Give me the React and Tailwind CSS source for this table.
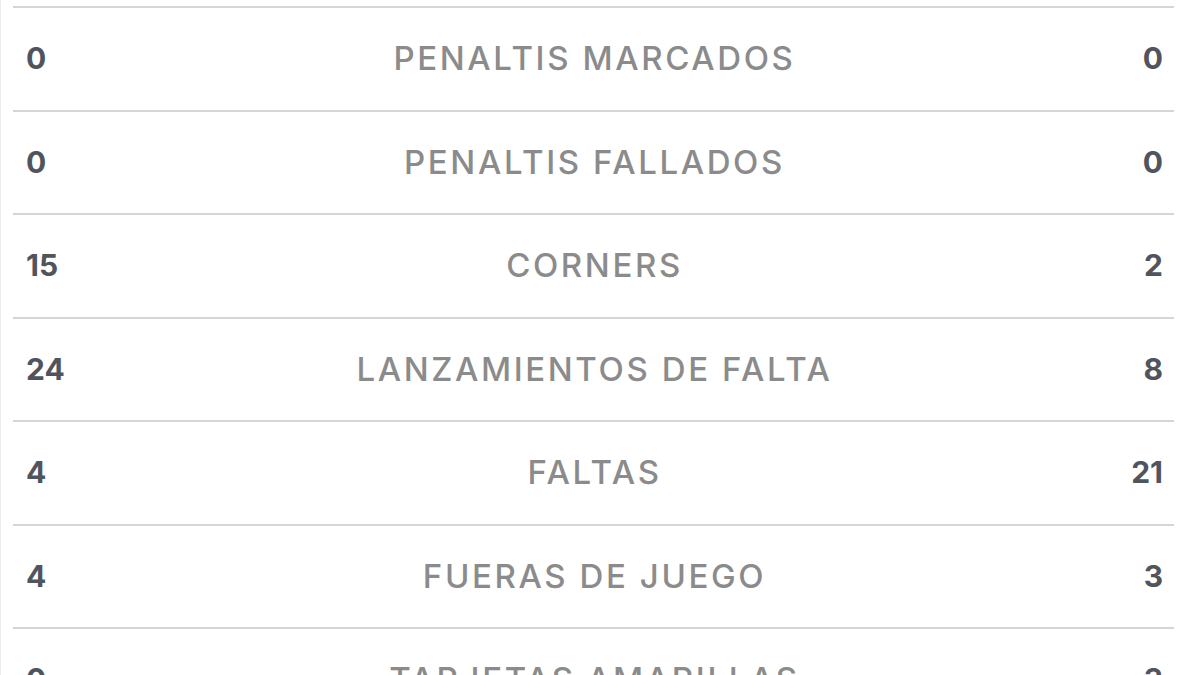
import React from "react";

const stats = [
  { home: "0", label: "PENALTIS MARCADOS", away: "0" },
  { home: "0", label: "PENALTIS FALLADOS", away: "0" },
  { home: "15", label: "CORNERS", away: "2" },
  { home: "24", label: "LANZAMIENTOS DE FALTA", away: "8" },
  { home: "4", label: "FALTAS", away: "21" },
  { home: "4", label: "FUERAS DE JUEGO", away: "3" },
  { home: "0", label: "TARJETAS AMARILLAS", away: "3" },
];

const App = () => {
  return (
    <div className="h-[675px] w-[1200px] overflow-hidden bg-white font-['Inter',sans-serif]">
      <div className="h-full border-l border-[#ececec] pl-[12px] pt-[6px]">
        <div className="w-[1161px]">
          {stats.map((row, i) => (
            <div
              key={i}
              className="flex h-[103.5px] items-center border-t-2 border-[#d5d5d5] pl-[13px] pr-[11px]"
            >
              <span className="w-[120px] text-[30px] font-bold text-[#50555d]">
                {row.home}
              </span>
              <span className="flex-1 text-center text-[33px] font-medium tracking-[2.6px] text-[#8b8b8b]">
                {row.label}
              </span>
              <span className="w-[120px] text-right text-[30px] font-bold text-[#50555d]">
                {row.away}
              </span>
            </div>
          ))}
        </div>
      </div>
    </div>
  );
};

export default App;
